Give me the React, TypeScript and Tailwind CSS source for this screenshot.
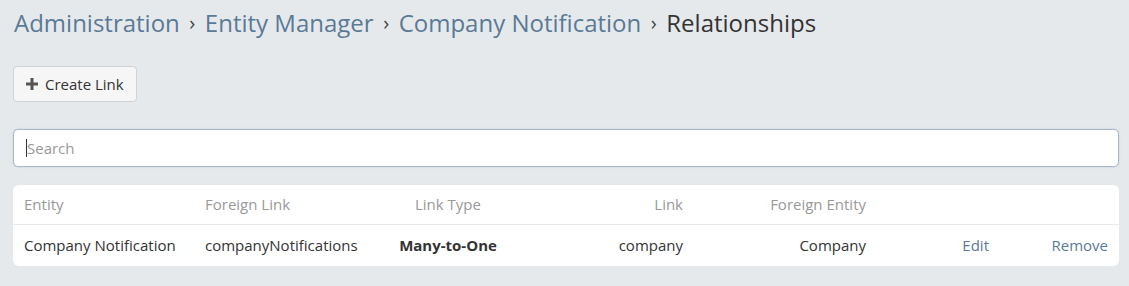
import React from "react";

const cols = "grid grid-cols-[181px_195px_118px_187px_183px_123px_119px]";

export default function App() {
  return (
    <div className="min-h-[286px] w-full bg-[#e6e9ec] pl-[13px] pr-[10px] pt-[7px] pb-5 text-[15px] text-[#333]" style={{ fontFamily: '"Open Sans", "Noto Sans", sans-serif' }}>
      <div className="flex items-center h-[32px] text-[24px] leading-[32px] ml-[1px]">
        <span className="text-[#5a7a96]">Administration</span>
        <span className="mx-[9.5px] text-[#444] text-[20px]">›</span>
        <span className="text-[#5a7a96]">Entity Manager</span>
        <span className="mx-[9.5px] text-[#444] text-[20px]">›</span>
        <span className="text-[#5a7a96]">Company Notification</span>
        <span className="mx-[9.5px] text-[#444] text-[20px]">›</span>
        <span className="text-[#333]">Relationships</span>
      </div>
      <div className="mt-[27px]">
        <button className="flex items-center h-[36px] pl-[11px] pr-[12px] rounded-[4px] border border-[#cfd3d7] bg-[#f6f6f6] text-[#333] text-[15px]">
          <svg width="14" height="14" viewBox="0 0 14 14" className="mr-[6px]"><path d="M7 1v12M1 7h12" stroke="#555" strokeWidth="3" /></svg>
          Create Link
        </button>
      </div>
      <div className="mt-[27px]">
        <div className="flex items-center h-[38px] rounded-[5px] border border-[#a9b9c9] bg-white pl-[12px] shadow-[0_0_2px_rgba(100,130,160,0.3)]">
          <span className="w-[1px] h-[18px] bg-[#333]"></span>
          <span className="text-[#999] text-[15px]">Search</span>
        </div>
      </div>
      <div className="mt-[18px] rounded-[6px] bg-white">
        <div className={`${cols} h-[40px] items-center text-[#999] border-b border-[#e8eaec]`}>
          <div className="pl-[11px]">Entity</div>
          <div className="pl-[11px]">Foreign Link</div>
          <div className="text-center">Link Type</div>
          <div className="text-right pr-[11px]">Link</div>
          <div className="text-right pr-[11px]">Foreign Entity</div>
          <div></div>
          <div></div>
        </div>
        <div className={`${cols} h-[41px] items-center text-[#333]`}>
          <div className="pl-[11px]">Company Notification</div>
          <div className="pl-[11px]">companyNotifications</div>
          <div className="text-center font-bold">Many-to-One</div>
          <div className="text-right pr-[11px]">company</div>
          <div className="text-right pr-[11px]">Company</div>
          <div className="text-right pr-[11px] text-[#5a7a96]">Edit</div>
          <div className="text-right pr-[11px] text-[#5a7a96]">Remove</div>
        </div>
      </div>
    </div>
  );
}
